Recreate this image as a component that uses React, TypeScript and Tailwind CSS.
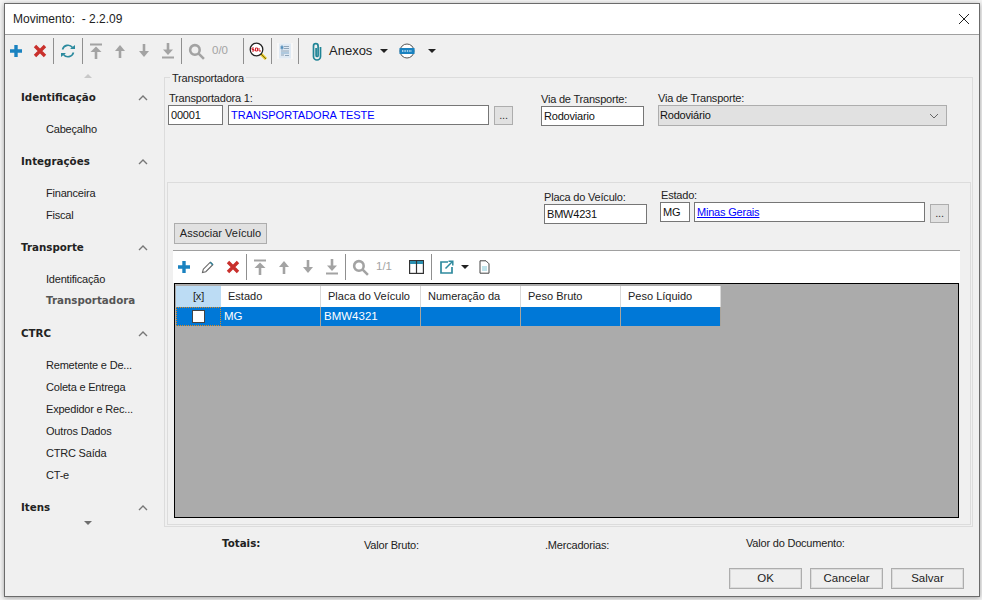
import type { ReactNode } from "react"

const Sep = ({ h = "h-[26px]" }: { h?: string }) => <div className={`w-px bg-[#8f8f8f] ${h} mx-[1px] shrink-0`} />

function Cell({ w = "w-[24px]", children }: { w?: string; children: ReactNode }) {
  return <div className={`${w} h-full flex items-center justify-center shrink-0`}>{children}</div>
}

const Plus = () => (
  <svg width="14" height="14" viewBox="0 0 14 14">
    <path d="M7 1v12M1 7h12" stroke="#1a82c0" strokeWidth="3.4" />
  </svg>
)
const Cross = () => (
  <svg width="14" height="14" viewBox="0 0 14 14">
    <path d="M2 2l10 10M12 2L2 12" stroke="#c9302c" strokeWidth="3.4" />
  </svg>
)
const Refresh = () => (
  <svg width="16" height="16" viewBox="0 0 16 16" fill="none">
    <path d="M2.5 6.5A5.7 5.7 0 0 1 12.5 4.5" stroke="#2b8a9e" strokeWidth="1.6" />
    <path d="M13.5 9.5A5.7 5.7 0 0 1 3.5 11.5" stroke="#2b8a9e" strokeWidth="1.6" />
    <path d="M10 6h5V2zM6 10H1v4z" fill="#2b8a9e" />
  </svg>
)
const Top = () => (
  <svg width="14" height="16" viewBox="0 0 14 16">
    <path d="M1 1.5h12" stroke="#a3a3a3" strokeWidth="2" />
    <path d="M7 16V7" stroke="#a3a3a3" strokeWidth="2.6" />
    <path d="M7 3.5L1.5 9h11z" fill="#a3a3a3" />
  </svg>
)
const Up = () => (
  <svg width="12" height="14" viewBox="0 0 12 14">
    <path d="M6 14V5" stroke="#a3a3a3" strokeWidth="2.6" />
    <path d="M6 1L1 7h10z" fill="#a3a3a3" />
  </svg>
)
const Down = () => (
  <svg width="12" height="14" viewBox="0 0 12 14">
    <path d="M6 0v9" stroke="#a3a3a3" strokeWidth="2.6" />
    <path d="M6 13L1 7h10z" fill="#a3a3a3" />
  </svg>
)
const Bottom = () => (
  <svg width="14" height="16" viewBox="0 0 14 16">
    <path d="M1 14.5h12" stroke="#a3a3a3" strokeWidth="2" />
    <path d="M7 0v8" stroke="#a3a3a3" strokeWidth="2.6" />
    <path d="M7 12L2 6.5h10z" fill="#a3a3a3" />
  </svg>
)
const Lens = () => (
  <svg width="17" height="17" viewBox="0 0 16 16" fill="none">
    <circle cx="6.5" cy="6.5" r="4.5" stroke="#a3a3a3" strokeWidth="2.4" />
    <path d="M10 10l5 5" stroke="#a3a3a3" strokeWidth="2.4" />
  </svg>
)
const SqlLens = () => (
  <svg width="18" height="18" viewBox="0 0 18 18" fill="none">
    <path d="M11 11l6 6" stroke="#e8c81e" strokeWidth="3" />
    <path d="M11 11l6 6" stroke="#222" strokeWidth="0.6" />
    <circle cx="7.5" cy="7.5" r="6.3" fill="#fff" stroke="#222" strokeWidth="1.3" />
    <path d="M5 6H3v1.5h2V9H3M6.5 6h2v3h-2zM10 6v3h2" stroke="#d3202a" strokeWidth="1" />
  </svg>
)
const Sheet = () => (
  <svg width="16" height="16" viewBox="0 0 16 16">
    <rect width="16" height="16" fill="#f7f7f7" />
    <rect x="2" y="0.5" width="12" height="15" fill="#dfe9f3" />
    <path d="M4 3h2v3H4zM4 10h8" fill="#2a76b0" stroke="#7fa8c9" />
    <path d="M7 3.5h5M7 5.5h5M4 8h8M4 12h3M8 12.5h4" stroke="#8ea4b8" />
  </svg>
)
const Clip = () => (
  <svg width="14" height="19" viewBox="0 0 14 19" fill="none">
    <path d="M10.5 5v9.5a3.5 3.5 0 0 1-7 0V4a2.3 2.3 0 0 1 4.6 0v9.5a1 1 0 0 1-2 0V6" stroke="#1f8496" strokeWidth="1.7" />
  </svg>
)
const Disk = () => (
  <svg width="16" height="16" viewBox="0 0 16 16">
    <circle cx="8" cy="8" r="7" fill="#fff" stroke="#555" />
    <rect x="0.5" y="5" width="15" height="6" fill="#1a82c0" />
    <path d="M3 8h10" stroke="#cfe6f5" strokeWidth="1.4" strokeDasharray="1.4 1" />
  </svg>
)
const Caret = () => (
  <svg width="8" height="4" viewBox="0 0 8 4">
    <path d="M0 0h8L4 4z" fill="#222" />
  </svg>
)
const Pencil = () => (
  <svg width="14" height="14" viewBox="0 0 14 14" fill="none">
    <path d="M1.5 12.5l.8-3.3 7-7 2.5 2.5-7 7z" fill="#fff" stroke="#666" strokeWidth="1.1" />
    <path d="M9.3 2.2l2.5 2.5" stroke="#2f7f96" strokeWidth="1.5" />
  </svg>
)
const TableIcon = () => (
  <svg width="15" height="14" viewBox="0 0 15 14" fill="none">
    <rect x="0.6" y="0.6" width="13.8" height="12.8" stroke="#333" strokeWidth="1.2" />
    <rect x="1" y="1" width="13" height="3" fill="#2a8fb0" />
    <path d="M7.5 1v12" stroke="#333" strokeWidth="1.2" />
  </svg>
)
const External = () => (
  <svg width="14" height="14" viewBox="0 0 14 14" fill="none">
    <path d="M8 2H1v11h11V7" stroke="#2f8a9e" strokeWidth="1.7" />
    <path d="M5.5 8.5L12 2M8.5 1.2h4.3v4.3" stroke="#2f8a9e" strokeWidth="1.5" />
  </svg>
)
const SmallDoc = () => (
  <svg width="11" height="14" viewBox="0 0 11 14" fill="none">
    <path d="M1 .8h6l3 3v9.4H1z" fill="#fff" stroke="#444" />
    <rect x="3" y="6" width="5" height="5" fill="#bfe3ea" />
  </svg>
)
const Chevron = () => (
  <svg width="10" height="6" viewBox="0 0 10 6" fill="none" className="shrink-0">
    <path d="M1 5l4-4 4 4" stroke="#777" strokeWidth="1.4" />
  </svg>
)

const boldText = "font-['DejaVu_Sans',sans-serif] font-bold text-[10.3px] tracking-normal"

function NavGroup({ title, items, mt }: { title: string; items: { label: string; bold?: boolean }[]; mt: string }) {
  return (
    <div className={mt}>
      <div className="h-[18px] px-[16px] flex items-center justify-between">
        <span className={`${boldText} text-[#222]`}>{title}</span>
        <Chevron />
      </div>
      <div className="mt-[11px] flex flex-col">
        {items.map((it) => (
          <div
            key={it.label}
            className={`h-[22px] pl-[41px] flex items-center ${it.bold ? `${boldText} text-[#555]` : "text-[11px] text-[#222]"}`}
          >
            {it.label}
          </div>
        ))}
      </div>
    </div>
  )
}

function Sidebar() {
  return (
    <aside className="w-[159px] shrink-0">
      <div className="flex justify-center pt-[7px] pl-[7px] h-[12px]">
        <div className="w-0 h-0 border-x-[4px] border-x-transparent border-b-[4px] border-b-[#c8c8c8]" />
      </div>
      <NavGroup title="Identificação" mt="mt-[10px]" items={[{ label: "Cabeçalho" }]} />
      <NavGroup title="Integrações" mt="mt-[13px]" items={[{ label: "Financeira" }, { label: "Fiscal" }]} />
      <NavGroup title="Transporte" mt="mt-[13px]" items={[{ label: "Identificação" }, { label: "Transportadora", bold: true }]} />
      <NavGroup
        title="CTRC"
        mt="mt-[13px]"
        items={[
          { label: "Remetente e De..." },
          { label: "Coleta e Entrega" },
          { label: "Expedidor e Rec..." },
          { label: "Outros Dados" },
          { label: "CTRC Saída" },
          { label: "CT-e" },
        ]}
      />
      <div className="mt-[13px] h-[18px] px-[16px] flex items-center justify-between">
        <span className={`${boldText} text-[#222]`}>Itens</span>
        <Chevron />
      </div>
      <div className="flex justify-center pl-[7px] mt-[4px]">
        <div className="w-0 h-0 border-x-[4px] border-x-transparent border-t-[4px] border-t-[#6e6e6e]" />
      </div>
    </aside>
  )
}

function Field({ w, h = "h-[20px]", text, cls = "text-[#111]" }: { w: string; h?: string; text: string; cls?: string }) {
  return (
    <div className={`${w} ${h} border border-[#767676] bg-white pl-[2px] flex items-center text-[11px] overflow-hidden ${cls}`}>
      {text}
    </div>
  )
}

const Dots = () => (
  <div className="w-[19px] h-[19px] bg-[#e1e1e1] border border-[#adadad] flex items-center justify-center text-[11px] text-[#333]">...</div>
)

const label = "h-[14px] text-[11px] leading-[14px] text-[#222]"

const columns = [
  { label: "Estado", value: "MG", w: "w-[100px]" },
  { label: "Placa do Veículo", value: "BMW4321", w: "w-[100px]" },
  { label: "Numeração da", value: "", w: "w-[100px]" },
  { label: "Peso Bruto", value: "", w: "w-[100px]" },
  { label: "Peso Líquido", value: "", w: "w-[100px]" },
]

function Grid() {
  return (
    <div className="mx-[1px] h-[235px] border border-black bg-[#ababab] pt-[2px] pl-[1px]">
      <div className="flex h-[21px]">
        <div className="w-[45px] bg-[#bcdcf4] flex items-center justify-center text-[11px] text-[#222]">[x]</div>
        {columns.map((c) => (
          <div key={c.label} className={`${c.w} bg-white border-r border-[#d9d9d9] pl-[7px] flex items-center text-[11px] tracking-normal text-[#222]`}>
            {c.label}
          </div>
        ))}
      </div>
      <div className="flex h-[19px] bg-[#0078d7] w-[545px]">
        <div className="w-[45px] flex items-center justify-center border border-dotted border-[#e08a1e]">
          <div className="w-[13px] h-[13px] bg-white border border-[#444]" />
        </div>
        {columns.map((c) => (
          <div key={c.label} className={`${c.w} border-r border-[#a9a49c] pl-[3px] flex items-center text-[11.5px] tracking-normal text-white`}>
            {c.value}
          </div>
        ))}
      </div>
    </div>
  )
}

function Content() {
  return (
    <section className="flex-1 flex flex-col">
      <div className="mr-[6px] mt-[10px] h-[450px] border border-[#dcdcdc] relative pl-[1px] flex flex-col">
        <span className="absolute left-[5px] -top-[7px] px-[2px] bg-[#f0f0f0] text-[11px] leading-[14px] text-[#222]">Transportadora</span>
        {/* dados da transportadora */}
        <div className="h-[104px] flex pl-[2px] pt-[13px] shrink-0">
          <div className="w-[346px] shrink-0">
            <div className={`${label} pl-[1px]`}>Transportadora 1:</div>
            <div className="flex items-center gap-[5px]">
              <Field w="w-[55px]" text="00001" />
              <Field w="w-[261px]" text="TRANSPORTADORA TESTE" cls="text-[#0000ff] tracking-normal" />
              <Dots />
            </div>
          </div>
          <div className="ml-[27px] w-[103px] pt-[1px] shrink-0">
            <div className={label}>Via de Transporte:</div>
            <Field w="w-[103px]" text="Rodoviario" />
          </div>
          <div className="ml-[14px] w-[289px] shrink-0">
            <div className={label}>Via de Transporte:</div>
            <div className="h-[21px] bg-[#e1e1e1] border border-[#adadad] pl-[1px] pr-[7px] flex items-center justify-between text-[11px] text-[#111]">
              Rodoviário
              <svg width="10" height="6" viewBox="0 0 10 6" fill="none">
                <path d="M1 1l4 4 4-4" stroke="#666" />
              </svg>
            </div>
          </div>
        </div>
        {/* veiculos */}
        <div className="flex-1 mx-[1px] mb-[1px] border border-[#dcdcdc] pl-[6px] pt-[6px]">
          <div className="flex h-[60px]">
            <button className="self-end mb-[5px] w-[93px] h-[21px] bg-[#e1e1e1] border border-[#adadad] text-[11px] tracking-normal text-[#222]">
              Associar Veículo
            </button>
            <div className="ml-[277px] w-[103px] pt-[1px]">
              <div className={label}>Placa do Veículo:</div>
              <Field w="w-[103px]" text="BMW4231" />
            </div>
            <div className="ml-[13px] -mt-[1px]">
              <div className={`${label} pl-[1px]`}>Estado:</div>
              <div className="flex items-start gap-[4px]">
                <Field w="w-[30px]" text="MG" />
                <Field w="w-[231px]" text="Minas Gerais" cls="text-[#0000ff] underline" />
                <div className="ml-[1px] mt-[2px]">
                  <Dots />
                </div>
              </div>
            </div>
          </div>
          <div className="w-[787px] -ml-[1px] mt-[1px] border-t border-[#a0a0a0]">
            <div className="h-[32px] bg-white flex items-center">
              <Cell w="w-[22px]"><Plus /></Cell>
              <Cell w="w-[25px]"><Pencil /></Cell>
              <Cell w="w-[25px]"><Cross /></Cell>
              <Sep />
              <Cell><Top /></Cell>
              <Cell><Up /></Cell>
              <Cell><Down /></Cell>
              <Cell><Bottom /></Cell>
              <Sep />
              <Cell w="w-[26px]"><Lens /></Cell>
              <span className="w-[30px] pl-[3px] text-[11.5px] tracking-normal text-[#a3a3a3]">1/1</span>
              <Cell w="w-[27px]"><TableIcon /></Cell>
              <Sep />
              <Cell w="w-[28px]"><External /></Cell>
              <Cell w="w-[8px]"><Caret /></Cell>
              <Cell w="w-[30px]"><SmallDoc /></Cell>
            </div>
            <Grid />
          </div>
        </div>
      </div>
    </section>
  )
}

function FooterButton({ label }: { label: string }) {
  return (
    <button className="w-[73px] h-[21px] bg-[#efefef] border border-[#adadad] shadow-[inset_0_0_0_1px_#dcdcdc] text-[11.5px] tracking-normal text-[#222]">{label}</button>
  )
}

export default function App() {
  return (
    <div className="w-[982px] h-[600px] bg-[#f4f4f4] overflow-hidden pt-[3px] pl-[4px] pr-[2px] pb-[3px] font-['Liberation_Sans',Arial,sans-serif] tracking-[-0.2px]">
      <div className="w-[976px] h-[594px] border border-[#6b6b6b] bg-[#f0f0f0] flex flex-col shadow-[0_1px_5px_rgba(0,0,0,0.35)]">
        {/* titulo */}
        <header className="h-[31px] shrink-0 bg-white border-b border-[#a0a0a0] pl-[8px] pr-[9px] flex items-center justify-between text-[12px] tracking-normal text-[#222]">
          <span>Movimento:&nbsp; - 2.2.09</span>
          <svg width="12" height="12" viewBox="0 0 12 12" fill="none">
            <path d="M1 1l10 10M11 1L1 11" stroke="#222" strokeWidth="1" />
          </svg>
        </header>
        {/* barra de ferramentas */}
        <div className="h-[32px] shrink-0 flex items-center">
          <Cell w="w-[22px]"><Plus /></Cell>
          <Cell w="w-[25px]"><Cross /></Cell>
          <Sep />
          <Cell w="w-[26px]"><Refresh /></Cell>
          <Sep />
          <Cell><Top /></Cell>
          <Cell><Up /></Cell>
          <Cell><Down /></Cell>
          <Cell><Bottom /></Cell>
          <Sep />
          <Cell w="w-[26px]"><Lens /></Cell>
          <span className="w-[33px] pl-[3px] text-[11.5px] tracking-normal text-[#a3a3a3]">0/0</span>
          <Sep />
          <Cell w="w-[25px]"><SqlLens /></Cell>
          <Sep />
          <Cell><Sheet /></Cell>
          <Sep />
          <div className="ml-[5px]" />
          <Cell><Clip /></Cell>
          <span className="text-[13px] tracking-normal text-[#222] w-[48px]">Anexos</span>
          <div className="ml-[3px]" />
          <Caret />
          <Cell w="w-[38px]"><Disk /></Cell>
          <Cell w="w-[12px]"><Caret /></Cell>
        </div>
        <div className="h-[461px] shrink-0 flex">
          <Sidebar />
          <Content />
        </div>
        {/* totais */}
        <div className="h-[30px] shrink-0 flex items-start pt-[8px] pl-[217px] text-[11px] text-[#222]">
          <span className={`w-[142px] ${boldText}`}>Totais:</span>
          <span className="w-[181px] mt-[1px]">Valor Bruto:</span>
          <span className="w-[201px] mt-[1px]">.Mercadorias:</span>
          <span className="-mt-[1px]">Valor do Documento:</span>
        </div>
        <div className="flex-1 flex justify-end gap-[8px] pr-[15px] pt-[10px]">
          <FooterButton label="OK" />
          <FooterButton label="Cancelar" />
          <FooterButton label="Salvar" />
        </div>
      </div>
    </div>
  )
}
